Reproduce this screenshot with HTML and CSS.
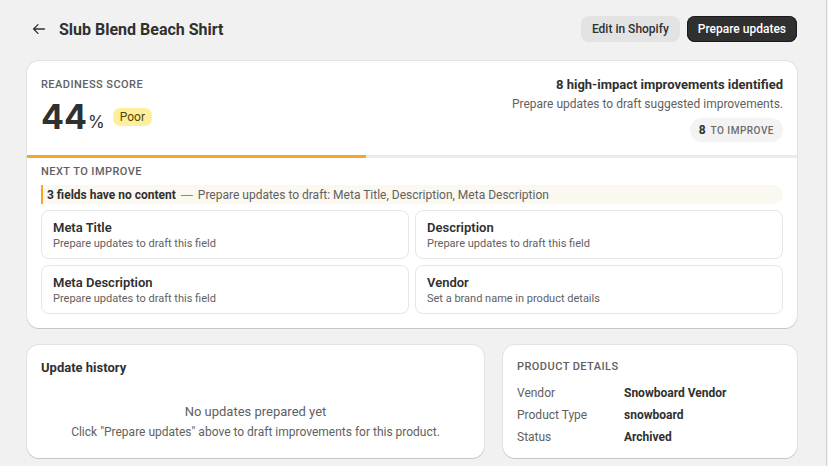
FILE: index.html
```html
<!DOCTYPE html>
<html lang="en">

<head>
    <meta charset="utf-8">
    <meta name="viewport" content="width=device-width, initial-scale=1">
    <title>Slub Blend Beach Shirt</title>
    <link rel="stylesheet" href="styles.css">
</head>

<body>
    <div class="page">
        <div class="header">
            <div class="header-left">
                <svg class="back" width="14" height="14" viewBox="0 0 14 14" fill="none">
                    <path d="M12.5 7H1.8M6 2.6L1.6 7L6 11.4" stroke="#303030" stroke-width="1.3" stroke-linecap="round" stroke-linejoin="round" />
                </svg>
                <h1 class="title">Slub Blend Beach Shirt</h1>
            </div>
            <div class="actions">
                <button class="btn btn-secondary">Edit in Shopify</button>
                <button class="btn btn-primary">Prepare updates</button>
            </div>
        </div>

        <div class="card score-card">
            <div class="score-top">
                <div class="score-left">
                    <div class="label">Readiness score</div>
                    <div class="score-row">
                        <span class="score">44</span><span class="pct">%</span>
                        <span class="badge">Poor</span>
                    </div>
                </div>
                <div class="score-right">
                    <div class="impact">8 high-impact improvements identified</div>
                    <div class="impact-sub">Prepare updates to draft suggested improvements.</div>
                    <div class="pill"><b>8</b> TO IMPROVE</div>
                </div>
            </div>

            <div class="progress">
                <div class="progress-fill" style="width: 44%"></div>
            </div>

            <div class="next">
                <div class="label">Next to improve</div>
                <div class="notice"><b>3 fields have no content</b><span class="dash">—</span>Prepare updates to draft: Meta Title, Description, Meta Description</div>
                <div class="fields">
                    <div class="field">
                        <div class="field-title">Meta Title</div>
                        <div class="field-sub">Prepare updates to draft this field</div>
                    </div>
                    <div class="field">
                        <div class="field-title">Description</div>
                        <div class="field-sub">Prepare updates to draft this field</div>
                    </div>
                    <div class="field">
                        <div class="field-title">Meta Description</div>
                        <div class="field-sub">Prepare updates to draft this field</div>
                    </div>
                    <div class="field">
                        <div class="field-title">Vendor</div>
                        <div class="field-sub">Set a brand name in product details</div>
                    </div>
                </div>
            </div>
        </div>

        <div class="bottom">
            <div class="card history">
                <div class="card-title">Update history</div>
                <div class="empty">
                    <div class="empty-title">No updates prepared yet</div>
                    <div class="empty-sub">Click "Prepare updates" above to draft improvements for this product.</div>
                </div>
            </div>
            <div class="card details">
                <div class="label">Product details</div>
                <div class="detail-grid">
                    <span class="key">Vendor</span><span class="val">Snowboard Vendor</span>
                    <span class="key">Product Type</span><span class="val">snowboard</span>
                    <span class="key">Status</span><span class="val">Archived</span>
                </div>
            </div>
        </div>
    </div>
</body>

</html>
```

FILE: styles.css
```css
html {
    background: #f1f1f1;
}

body {
    margin: 0;
    font-family: Roboto, Inter, sans-serif;
    color: #303030;
    background: #f1f1f1;
}

.page {
    width: 827px;
    min-height: 466px;
    box-sizing: border-box;
    padding: 16px 29px 0 27px;
    border-right: 1px solid #d4d4d4;
}

.header {
    display: flex;
    justify-content: space-between;
    align-items: center;
    height: 26px;
    margin-bottom: 19px;
}

.header-left {
    display: flex;
    align-items: center;
    gap: 13px;
    padding-left: 5px;
}

.back {
    display: block;
}

.title {
    margin: 0;
    font-size: 16px;
    font-weight: 700;
}

.actions {
    display: flex;
    gap: 7px;
}

.btn {
    height: 26px;
    border: 0;
    border-radius: 8px;
    font-family: inherit;
    font-size: 12px;
    font-weight: 500;
    padding: 0 11px;
}

.btn-secondary {
    background: #e3e3e3;
    color: #303030;
}

.btn-primary {
    background: #303030;
    color: #fff;
    box-shadow: inset 0 0 0 1px #1a1a1a, inset 0 1px 0 rgba(255, 255, 255, 0.25);
}

.card {
    background: #fff;
    border-radius: 12px;
    box-shadow: 0 1px 0 rgba(0, 0, 0, 0.12), 0 0 0 1px rgba(0, 0, 0, 0.06);
}

.score-card {
    overflow: hidden;
}

.score-top {
    display: flex;
    justify-content: space-between;
    padding: 16px 14px 13px;
}

.label {
    font-size: 11px;
    font-weight: 500;
    letter-spacing: 0.45px;
    text-transform: uppercase;
    color: #616161;
    line-height: 16px;
}

.score-row {
    display: flex;
    align-items: center;
    margin-top: 4px;
}

.score {
    font-family: Inter, Roboto, sans-serif;
    font-size: 34px;
    font-weight: 700;
    line-height: 40px;
}

.pct {
    font-family: Inter, Roboto, sans-serif;
    font-size: 17px;
    align-self: flex-end;
    margin: 0 0 5px 1px;
    color: #303030;
}

.badge {
    margin-left: 8px;
    background: #ffef9d;
    color: #4f4700;
    font-size: 12px;
    font-weight: 400;
    padding: 1px 7px;
    border-radius: 7px;
    line-height: 16px;
}

.score-right {
    display: flex;
    flex-direction: column;
    align-items: flex-end;
}

.impact {
    font-size: 13px;
    font-weight: 700;
    line-height: 16px;
}

.impact-sub {
    margin-top: 3px;
    font-size: 12px;
    color: #616161;
    line-height: 16px;
}

.pill {
    margin-top: 6px;
    background: #f3f3f3;
    border-radius: 12px;
    height: 24px;
    padding: 0 9px;
    display: flex;
    align-items: center;
    gap: 5px;
    font-size: 10px;
    font-weight: 500;
    letter-spacing: 0.5px;
    color: #6b6b6b;
}

.pill b {
    font-size: 12px;
    font-weight: 700;
    color: #303030;
    letter-spacing: 0;
}

.progress {
    height: 3px;
    background: #ebebeb;
}

.progress-fill {
    height: 100%;
    background: #f5a623;
}

.next {
    padding: 6px 14px 14px;
}

.notice {
    margin-top: 5px;
    height: 19px;
    line-height: 19px;
    background: #fbf8f0;
    border-left: 2px solid #f5a623;
    border-radius: 0 10px 10px 0;
    padding-left: 4px;
    font-size: 12px;
    color: #616161;
}

.notice b {
    color: #303030;
    font-weight: 700;
}

.dash {
    font-family: Inter, sans-serif;
    color: #8a8a8a;
    margin: 0 5px;
}

.fields {
    margin-top: 6px;
    display: grid;
    grid-template-columns: 1fr 1fr;
    gap: 6px;
}

.field {
    border: 1px solid #e6e6e6;
    border-radius: 8px;
    height: 49px;
    box-sizing: border-box;
    padding: 8px 11px;
}

.field-title {
    font-size: 13px;
    font-weight: 600;
    line-height: 17px;
}

.field-sub {
    font-size: 11px;
    color: #616161;
    line-height: 15px;
}

.bottom {
    margin-top: 17px;
    display: grid;
    grid-template-columns: 457px 1fr;
    gap: 19px;
}

.history {
    height: 113px;
    box-sizing: border-box;
    padding: 15px 14px;
}

.card-title {
    font-size: 13px;
    font-weight: 700;
    line-height: 16px;
}

.empty {
    text-align: center;
    margin-top: 28px;
    color: #616161;
}

.empty-title {
    font-size: 13px;
    line-height: 16px;
}

.empty-sub {
    margin-top: 4px;
    font-size: 12px;
    line-height: 16px;
}

.details {
    height: 113px;
    box-sizing: border-box;
    padding: 14px 14px;
}

.detail-grid {
    margin-top: 10px;
    display: grid;
    grid-template-columns: 107px 1fr;
    row-gap: 6px;
    font-size: 12px;
    line-height: 16px;
}

.key {
    color: #616161;
}

.val {
    font-weight: 700;
}
```
